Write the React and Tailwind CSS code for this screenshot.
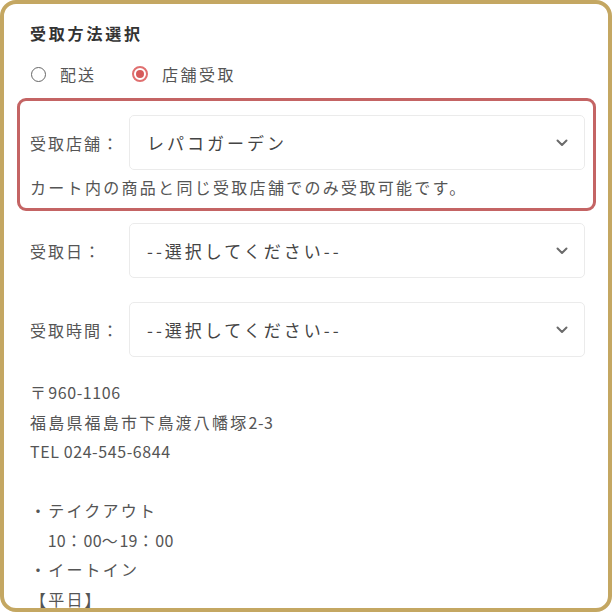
import React from "react";

const cjk = '"Noto Sans CJK JP", "Noto Sans", sans-serif';

function Chevron() {
  return (
    <svg width="12" height="8" viewBox="0 0 12 8" className="shrink-0">
      <path d="M1.5 1.5 L6 6 L10.5 1.5" fill="none" stroke="#6b6b6b" strokeWidth="2" strokeLinecap="round" strokeLinejoin="round" />
    </svg>
  );
}

function Select({ value }) {
  return (
    <div className="flex-1 h-[55px] border border-[#ebebeb] rounded-[5px] flex items-center pl-[17px] pr-[16px] bg-white">
      <span className="flex-1 text-[17px] tracking-[3px] text-[#444]">{value}</span>
      <Chevron />
    </div>
  );
}

function Row({ label, value }) {
  return (
    <div className="flex items-center">
      <div className="w-[99px] shrink-0 text-[16px] tracking-[2px] text-[#555]">{label}</div>
      <Select value={value} />
    </div>
  );
}

function L({ children }) {
  return <span className="tracking-[0.6px]">{children}</span>;
}

export default function App() {
  return (
    <div className="w-[612px] h-[612px] bg-white" style={{ fontFamily: cjk }}>
      <div className="w-[612px] h-[612px] border-4 border-[#c4a762] rounded-[16px] overflow-hidden pt-[17px] pl-[26px] pr-[23px]">
        <div className="h-[24px] leading-[24px] text-[16px] font-bold tracking-[2.8px] text-[#333]">受取方法選択</div>
        <div className="mt-[17px] h-[24px] flex items-center text-[16px] tracking-[2px] text-[#555]">
          <span className="w-[15px] h-[15px] ml-[1px] rounded-full border-[1.5px] border-[#666] bg-white" />
          <span className="ml-[14px]">配送</span>
          <span className="ml-[36px] w-[16px] h-[16px] rounded-full border-[2px] border-[#e07070] flex items-center justify-center">
            <span className="w-[8px] h-[8px] rounded-full bg-[#d65a5a]" />
          </span>
          <span className="ml-[14px] tracking-[2.5px]">店舗受取</span>
        </div>
        <div className="mt-[12px] -ml-[13px] -mr-[11px] border-[3px] border-[#c46464] rounded-[9px] pt-[14px] pb-[9px] pl-[10px] pr-[8px]">
          <Row label="受取店舗：" value="レパコガーデン" />
          <div className="mt-[5px] h-[24px] leading-[24px] text-[16px] tracking-[2.3px] text-[#555] whitespace-nowrap">
            カート内の商品と同じ受取店舗でのみ受取可能です。
          </div>
        </div>
        <div className="mt-[12px]">
          <Row label="受取日：" value="--選択してください--" />
        </div>
        <div className="mt-[24px]">
          <Row label="受取時間：" value="--選択してください--" />
        </div>
        <div className="mt-[21px] text-[16px] leading-[29.5px] tracking-[2.2px] text-[#555] whitespace-pre">
          <div>〒<L>960-1106</L></div>
          <div>福島県福島市下鳥渡八幡塚<L>2-3</L></div>
          <div><L>TEL 024-545-6844</L></div>
          <div>&nbsp;</div>
          <div>・テイクアウト</div>
          <div className="tracking-[1.7px]">　<span className="tracking-[0.2px]">10</span>：<span className="tracking-[0.2px]">00</span>〜<span className="tracking-[0.2px]">19</span>：<span className="tracking-[0.2px]">00</span></div>
          <div>・イートイン</div>
          <div>【平日】</div>
        </div>
      </div>
    </div>
  );
}
